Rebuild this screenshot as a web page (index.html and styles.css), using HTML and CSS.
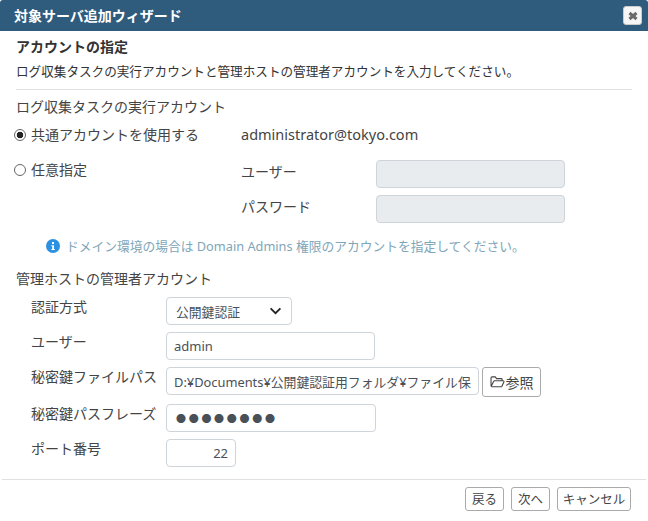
FILE: index.html
```html
<!DOCTYPE html>
<html lang="ja">
<head>
<meta charset="utf-8">
<title>対象サーバ追加ウィザード</title>
<link rel="stylesheet" href="styles.css">
</head>
<body>
<div class="dialog">
  <header class="titlebar">
    <span class="title">対象サーバ追加ウィザード</span>
    <button class="close" type="button" aria-label="閉じる">
      <svg viewBox="0 0 12 12" width="12" height="12"><path d="M2.5 3 L9.5 9 M9.5 3 L2.5 9" fill="none" stroke="#6a6a6a" stroke-width="3"/></svg>
    </button>
  </header>
  <main class="content">
    <h1 class="step-title">アカウントの指定</h1>
    <p class="step-desc">ログ収集タスクの実行アカウントと管理ホストの管理者アカウントを入力してください。</p>
    <hr class="rule">
    <h2 class="section">ログ収集タスクの実行アカウント</h2>
    <div class="choice choice-shared">
      <label class="radio-label"><input class="radio" type="radio" name="acct" checked><span class="radio-text">共通アカウントを使用する</span></label>
      <span class="shared-value">administrator@tokyo.com</span>
    </div>
    <div class="choice choice-custom">
      <label class="radio-label"><input class="radio" type="radio" name="acct"><span class="radio-text">任意指定</span></label>
      <div class="custom-fields">
        <div class="custom-row"><span class="custom-label">ユーザー</span><input class="field field-disabled" type="text" disabled></div>
        <div class="custom-row"><span class="custom-label">パスワード</span><input class="field field-disabled" type="text" disabled></div>
      </div>
    </div>
    <p class="info">
      <svg class="info-icon" viewBox="0 0 14 14" width="14" height="14"><circle cx="7" cy="7" r="7" fill="#2b91e3"/><rect x="6" y="3" width="2" height="2" fill="#fff"/><path d="M5.4 6.2H8V10H8.8V11H5.4V10H6.2V7.2H5.4Z" fill="#fff"/></svg>
      <span class="info-text">ドメイン環境の場合は Domain Admins 権限のアカウントを指定してください。</span>
    </p>
    <h2 class="section section-host">管理ホストの管理者アカウント</h2>
    <div class="form">
      <div class="form-row">
        <span class="form-label">認証方式</span>
        <div class="select"><span>公開鍵認証</span><svg viewBox="0 0 14 9" width="13" height="8"><path d="M1.5 1.5 L7 7 L12.5 1.5" fill="none" stroke="#222" stroke-width="2"/></svg></div>
      </div>
      <div class="form-row">
        <span class="form-label">ユーザー</span>
        <input class="field field-user" type="text" value="admin">
      </div>
      <div class="form-row">
        <span class="form-label">秘密鍵ファイルパス</span>
        <input class="field field-path" type="text" value="D:¥Documents¥公開鍵認証用フォルダ¥ファイル保存先¥id_rsa">
        <button class="btn btn-browse" type="button">
          <svg viewBox="0 0 16 13" width="15" height="12"><path d="M1 11.5V2.2C1 1.5 1.5 1 2.2 1H5.5L7 2.8H12C12.7 2.8 13 3.2 13 3.8V5.2M1 11.5L3.8 6C4 5.5 4.4 5.2 5 5.2H14C14.8 5.2 15.2 5.8 14.9 6.5L12.8 11C12.6 11.4 12.2 11.6 11.8 11.6H1.2" fill="none" stroke="#444" stroke-width="1.2"/></svg>参照</button>
      </div>
      <div class="form-row">
        <span class="form-label">秘密鍵パスフレーズ</span>
        <input class="field field-pass" type="text" value="●●●●●●●●">
      </div>
      <div class="form-row">
        <span class="form-label">ポート番号</span>
        <input class="field field-port" type="text" value="22">
      </div>
    </div>
  </main>
  <footer class="footer">
    <button class="btn" type="button">戻る</button>
    <button class="btn" type="button">次へ</button>
    <button class="btn btn-cancel" type="button">キャンセル</button>
  </footer>
</div>
</body>
</html>
```
FILE: styles.css
```css
* { box-sizing: border-box; }
html, body { margin: 0; padding: 0; background: #fff; }
body {
  width: 648px;
  height: 521px;
  overflow: hidden;
  font-family: "Noto Sans", "Noto Sans CJK JP", sans-serif;
  font-size: 14px;
  color: #444;
}
.dialog { display: flex; flex-direction: column; height: 521px; }
.titlebar {
  height: 31px;
  flex: none;
  background: #2f5b7c;
  display: flex;
  align-items: center;
  justify-content: space-between;
  padding: 0 6px 0 14px;
  border-radius: 3px 3px 0 0;
}
.title { color: #fff; font-size: 14px; font-weight: 700; line-height: 20px; }
.close {
  width: 19px;
  height: 19px;
  padding: 0;
  display: flex;
  align-items: center;
  justify-content: center;
  background: #f6f6f6;
  border: 1px solid #ccc;
  border-radius: 3px;
}
.content { padding: 6px 16px 0; flex: none; height: 448px; }
.step-title { margin: 0; font-size: 14px; font-weight: 700; line-height: 20px; color: #333; }
.step-desc { margin: 5px 0 0; font-size: 12.6px; line-height: 20px; color: #333; }
.rule { margin: 7px 0 0; border: 0; border-top: 1px solid #e0e0e0; }
.section { margin: 7px 0 0; font-size: 14px; font-weight: 400; line-height: 20px; color: #444; }
.section-host { margin-top: 13px; }
.choice { display: flex; margin-left: -2px; }
.choice-shared { margin-top: 8px; height: 20px; }
.choice-custom { margin-top: 15px; height: 63px; }
.radio-label { width: 227px; display: flex; align-items: center; height: 20px; }
.radio-text { margin-top: -2px; }
.radio {
  appearance: none;
  width: 12px;
  height: 12px;
  margin: 0 5px 0 0;
  border: 1px solid #666;
  border-radius: 50%;
  background: #fff;
}
.radio:checked { background: radial-gradient(circle, #222 0 3px, #fff 3.6px); }
.shared-value { line-height: 18px; font-size: 14.5px; }
.custom-fields { display: flex; flex-direction: column; gap: 7px; }
.custom-row { display: flex; align-items: flex-start; height: 28px; }
.custom-label { width: 135px; line-height: 20px; margin-top: 2px; }
.field {
  height: 28px;
  padding: 0 7px;
  font: inherit;
  font-size: 13px;
  color: #495057;
  background: #fff;
  border: 1px solid #ced4da;
  border-radius: 4px;
  outline: none;
}
.field-disabled { width: 189px; background: #e9ecef; }
.info { margin: 13px 0 0 30px; display: flex; align-items: center; gap: 6px; height: 20px; font-size: 12.75px; color: #7fa6b8; }
.info-icon { flex: none; }
.info-text { margin-top: -2px; }
.form { margin-top: 8px; display: flex; flex-direction: column; gap: 7px; padding-left: 15px; }
.form-row { display: flex; align-items: flex-start; }
.form-label { width: 135px; line-height: 20px; flex: none; }
.select {
  width: 126px;
  height: 28px;
  padding: 0 9px 0 9px;
  display: flex;
  align-items: center;
  justify-content: space-between;
  font-size: 12.8px;
  color: #495057;
  border: 1px solid #ced4da;
  border-radius: 4px;
  background: #fff;
}
.field-user { width: 209px; }
.field-path { width: 313px; font-size: 12.85px; }
.field-pass { width: 210px; padding-left: 9px; font-size: 10px; letter-spacing: 2.7px; color: #495057; }
.field-port { width: 70px; text-align: right; }
.btn {
  height: 24px;
  padding: 0;
  font: inherit;
  font-size: 12.5px;
  color: #444;
  background: #fff;
  border: 1px solid #aaa;
  border-radius: 3px;
  white-space: nowrap;
  display: flex;
  align-items: center;
  justify-content: center;
}
.btn-browse { margin-left: 3px; width: 59px; height: 30px; gap: 1px; font-size: 14px; }
.footer {
  flex: none;
  margin: 0 2px;
  height: 42px;
  border-top: 1px solid #e0e0e0;
  padding: 7px 15px 0 0;
  display: flex;
  justify-content: flex-end;
  gap: 7px;
}
.footer .btn { width: 39px; padding-bottom: 2px; }
.footer .btn-cancel { width: 74px; }
```
